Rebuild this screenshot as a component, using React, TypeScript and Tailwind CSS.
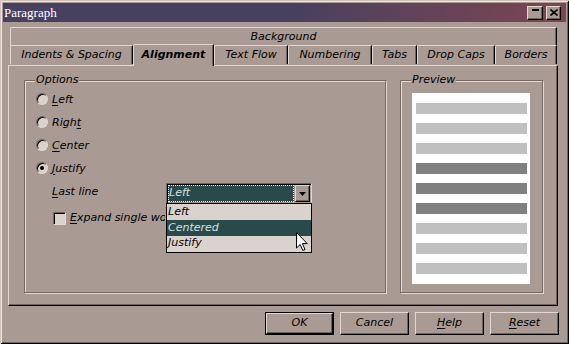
import React from 'react';

const raised =
  'border border-t-[#e2d8d0] border-l-[#e2d8d0] border-r-black border-b-black shadow-[inset_-1px_-1px_0_#6e635d]';
const sunken =
  'border border-t-[#6e635d] border-l-[#6e635d] border-r-[#e2d8d0] border-b-[#e2d8d0] shadow-[inset_1px_1px_0_#000]';
const etched = 'border border-[#776a63] shadow-[inset_1px_1px_0_#e2d8d0,1px_1px_0_#e2d8d0]';
const tabEdge =
  'border-t border-l border-r border-t-[#e2d8d0] border-l-[#e2d8d0] border-r-black shadow-[inset_-1px_0_0_#6e635d] rounded-tl-[2px]';

const TABS = [
  { label: 'Indents & Spacing', w: 'w-[123px]' },
  { label: 'Alignment', w: 'w-[81px]', active: true },
  { label: 'Text Flow', w: 'w-[74px]' },
  { label: 'Numbering', w: 'w-[84px]' },
  { label: 'Tabs', w: 'w-[45px]' },
  { label: 'Drop Caps', w: 'w-[78px]' },
  { label: 'Borders', w: 'w-[62px]' },
];

const BARS = ['light', 'light', 'light', 'dark', 'dark', 'dark', 'light', 'light', 'light'];

// label with mnemonic underline
function Mn({ pre = '', u, post = '' }: { pre?: string; u: string; post?: string }) {
  return (
    <span>
      {pre}
      <span className="underline underline-offset-[2px]">{u}</span>
      {post}
    </span>
  );
}

function Radio({ checked, children }: { checked?: boolean; children: React.ReactNode }) {
  return (
    <div className="flex items-center gap-[4px] h-[12px]">
      <div
        className={`w-[12px] h-[12px] rounded-full flex items-center justify-center bg-[#dad2cc] ${sunken}`}
      >
        {checked && <div className="w-[4px] h-[4px] rounded-full bg-black" />}
      </div>
      <span className="leading-none">{children}</span>
    </div>
  );
}

function Group({ label, className, children }: { label: string; className: string; children: React.ReactNode }) {
  return (
    <div className={`relative ${etched} ${className}`}>
      <span className="absolute -top-[7px] left-[10px] px-[1px] bg-[#a99b93] leading-none">{label}</span>
      {children}
    </div>
  );
}

function Cursor() {
  return (
    <svg width="12" height="20" viewBox="0 0 12 20" className="absolute left-[129px] top-[28px]">
      <path d="M0.5 0.5 L0.5 16 L4.2 12.5 L6.8 18.5 L9 17.5 L6.4 11.6 L11.2 11.6 Z" fill="#fff" stroke="#000" strokeWidth="1" />
    </svg>
  );
}

export default function App() {
  return (
    <div
      className="w-[569px] h-[344px] p-[3px] bg-[#a99b93] text-black text-[11px] italic font-['DejaVu_Sans',sans-serif] shadow-[inset_1px_1px_0_#cfc3bb,inset_-1px_-1px_0_#000,inset_2px_2px_0_#efe6df,inset_-2px_-2px_0_#6e635d] overflow-hidden"
    >
      {/* Title bar */}
      <div className="h-[19px] flex items-center justify-between bg-gradient-to-r from-[#47405f] from-50% to-[#7d4550]">
        <span className="pl-[1px] text-[13px] not-italic text-white font-['Liberation_Serif',serif] leading-none">
          Paragraph
        </span>
        <div className="flex items-center gap-[3px] pr-[5px]">
          <div className={`w-[16px] h-[14px] bg-[#a99b93] flex justify-center pt-[2px] ${raised}`}>
            <div className="w-[7px] h-[2px] bg-black" />
          </div>
          <div className={`w-[15px] h-[14px] bg-[#a99b93] flex items-center justify-center ${raised}`}>
            <svg width="8" height="7" viewBox="0 0 8 7">
              <path d="M0.5 0.5 L7.5 6.5 M7.5 0.5 L0.5 6.5" stroke="#000" strokeWidth="1.6" />
            </svg>
          </div>
        </div>
      </div>

      {/* Tabs */}
      <div className="mt-[5px] ml-[7px] w-[547px]">
        <div className={`h-[19px] flex items-center justify-center ${tabEdge}`}>Background</div>
        <div className="h-[19px] flex items-end relative z-10">
          {TABS.map(t =>
            t.active ? (
              <div
                key={t.label}
                className={`${t.w} h-[22px] -mb-[1px] bg-[#a99b93] flex items-center justify-center font-bold ${tabEdge}`}
              >
                {t.label}
              </div>
            ) : (
              <div key={t.label} className={`${t.w} h-[19px] mb-[1px] flex items-center justify-center ${tabEdge}`}>
                {t.label}
              </div>
            )
          )}
        </div>
      </div>

      {/* Panel */}
      <div
        className="ml-[5px] w-[550px] h-[241px] border border-t-[#e2d8d0] border-l-[#e2d8d0] border-r-black border-b-black shadow-[inset_-1px_-1px_0_#6e635d] pt-[14px] pl-[15px] flex gap-[14px]"
      >
        <Group label="Options" className="w-[362px] h-[213px] pt-[12px] pl-[11px]">
          <div className="flex flex-col gap-[11px]">
            <Radio><Mn u="L" post="eft" /></Radio>
            <Radio><Mn pre="Righ" u="t" /></Radio>
            <Radio><Mn u="C" post="enter" /></Radio>
            <Radio checked><Mn u="J" post="ustify" /></Radio>
          </div>

          <div className="mt-[9px] ml-[16px] flex items-start">
            <span className="w-[114px] pt-[1px]"><Mn u="L" post="ast line" /></span>
            <div className="relative">
              <div className={`w-[146px] h-[21px] flex ${sunken} bg-[#a99b93]`}>
                <div className="flex-1 m-[1px] bg-[#294a4a] text-[#d8e0e0] flex items-center outline-1 outline-dotted outline-offset-[-1px] outline-white pl-[1px]">
                  Left
                </div>
                <div className={`w-[15px] h-[17px] mt-[1px] mr-[1px] bg-[#a99b93] flex items-center justify-center ${raised}`}>
                  <svg width="7" height="4" viewBox="0 0 7 4">
                    <path d="M0 0 L7 0 L3.5 4 Z" fill="#000" />
                  </svg>
                </div>
              </div>
              <div className="absolute left-0 top-[20px] w-[146px] border border-black bg-[#dad2cc] z-20 py-[1px]">
                <div className="h-[15px] pl-[1px] flex items-center">Left</div>
                <div className="h-[16px] pl-[1px] flex items-center bg-[#294a4a] text-[#d8e0e0]">Centered</div>
                <div className="h-[15px] pl-[1px] flex items-center">Justify</div>
                <Cursor />
              </div>
            </div>
          </div>

          <div className="mt-[6px] ml-[17px] flex items-center gap-[4px]">
            <div className={`w-[13px] h-[13px] bg-[#dad2cc] ${sunken}`} />
            {/* the open list lies over the end of this label */}
            <span className="w-[95px] overflow-hidden whitespace-nowrap">
              <Mn u="E" post="xpand single word" />
            </span>
          </div>
        </Group>

        <Group label="Preview" className="w-[143px] h-[213px] pt-[12px] pl-[11px]">
          <div className="w-[118px] h-[191px] bg-white pt-[10px] pl-[4px] pr-[3px] flex flex-col gap-[9px]">
            {BARS.map((b, i) => (
              <div key={i} className={`h-[11px] ${b === 'dark' ? 'bg-[#808080]' : 'bg-[#c0c0c0]'}`} />
            ))}
          </div>
        </Group>
      </div>

      {/* Buttons */}
      <div className="mt-[6px] pr-[7px] flex justify-end gap-[6px]">
        <div className="w-[69px] h-[23px] border border-black">
          <div className={`w-full h-full flex items-center justify-center ${raised}`}>OK</div>
        </div>
        <div className={`w-[69px] h-[23px] flex items-center justify-center ${raised}`}>Cancel</div>
        <div className={`w-[69px] h-[23px] flex items-center justify-center ${raised}`}>
          <Mn u="H" post="elp" />
        </div>
        <div className={`w-[69px] h-[23px] flex items-center justify-center ${raised}`}>
          <Mn u="R" post="eset" />
        </div>
      </div>
    </div>
  );
}
